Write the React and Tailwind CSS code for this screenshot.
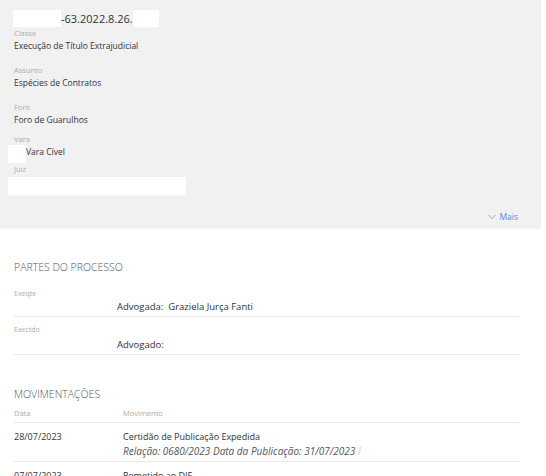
import React from "react";

const font = { fontFamily: '"Open Sans", "Noto Sans", sans-serif' };

function Field({ label, children, mt }) {
  return (
    <div className={mt}>
      <div className="text-[7.5px] leading-[12px] text-[#adadad]">{label}</div>
      <div className="text-[8.5px] leading-[14px] text-[#333]">{children}</div>
    </div>
  );
}

export default function App() {
  return (
    <div className="w-[546px] h-[476px] overflow-hidden bg-white" style={font}>
      <div className="w-[541px] h-[229px] bg-[#f1f1f1] pt-[10px] pl-[14px] pr-[23px] flex flex-col">
        <div className="flex items-center h-[17px] -ml-px">
          <div className="w-[48px] h-[17px] bg-white" />
          <span className="text-[11px] leading-[17px] text-[#333]">-63.2022.8.26.</span>
          <div className="w-[26px] h-[17px] bg-white" />
        </div>
        <Field label="Classe">Execução de Título Extrajudicial</Field>
        <Field label="Assunto" mt="mt-[11px]">Espécies de Contratos</Field>
        <Field label="Foro" mt="mt-[11px]">Foro de Guarulhos</Field>
        <div className="mt-[6px]">
          <div className="text-[7.5px] leading-[12px] text-[#adadad]">Vara</div>
          <div className="flex items-start -ml-[6px] h-[18px]">
            <div className="w-[18px] h-[18px] bg-white" />
            <span className="text-[8.5px] leading-[14px] text-[#333]">Vara Cível</span>
          </div>
        </div>
        <div>
          <div className="text-[7.5px] leading-[12px] text-[#adadad]">Juiz</div>
          <div className="-ml-[6px] mt-[2px] w-[178px] h-[18px] bg-white" />
        </div>
        <div className="mt-auto mb-[6px] flex justify-end items-center gap-[3px] text-[8.5px] leading-[12px] text-[#4a90d9]">
          <svg width="8" height="6" viewBox="0 0 8 6" fill="none">
            <path d="M0.5 1 L4 4.5 L7.5 1" stroke="#7aa8dc" strokeWidth="0.9" />
          </svg>
          <span>Mais</span>
        </div>
      </div>

      <div className="pl-[14px] pr-[27px]">
        <div className="mt-[31px] text-[10.5px] leading-[14px] text-[#555] font-light">PARTES DO PROCESSO</div>
        <div className="mt-[14px]">
          <div className="text-[7px] leading-[12px] text-[#adadad]">Exeqte</div>
          <div className="pl-[103px] text-[9.5px] leading-[13px] text-[#333] whitespace-pre">Advogada:  Graziela Jurça Fanti</div>
          <div className="mt-[3px] h-px bg-[#e9e9e9]" />
        </div>
        <div className="mt-[7px]">
          <div className="text-[7px] leading-[12px] text-[#adadad]">Exectdo</div>
          <div className="mt-[2px] pl-[103px] text-[9.5px] leading-[13px] text-[#333]">Advogado:</div>
          <div className="mt-[3px] h-px bg-[#e9e9e9]" />
        </div>

        <div className="mt-[32px] text-[10.5px] leading-[14px] text-[#555] font-light">MOVIMENTAÇÕES</div>
        <div className="mt-[6px] flex text-[7.5px] leading-[12px] text-[#adadad]">
          <div className="w-[109px]">Data</div>
          <div>Movimento</div>
        </div>
        <div className="mt-[3px] h-px bg-[#e9e9e9]" />
        <div className="flex pt-[7px] pb-[3px]">
          <div className="w-[109px] text-[9px] leading-[14px] text-[#333]">28/07/2023</div>
          <div>
            <div className="text-[9px] leading-[14px] text-[#333]">Certidão de Publicação Expedida</div>
            <div className="text-[10px] leading-[14px] text-[#555] italic">
              Relação: 0680/2023 Data da Publicação: 31/07/2023 <span className="text-[#ccc]">I</span>
            </div>
          </div>
        </div>
        <div className="h-px bg-[#e9e9e9]" />
        <div className="flex pt-[7px]">
          <div className="w-[109px] text-[9px] leading-[14px] text-[#333]">07/07/2023</div>
          <div className="text-[9px] leading-[14px] text-[#333]">Remetido ao DJE</div>
        </div>
      </div>
    </div>
  );
}
